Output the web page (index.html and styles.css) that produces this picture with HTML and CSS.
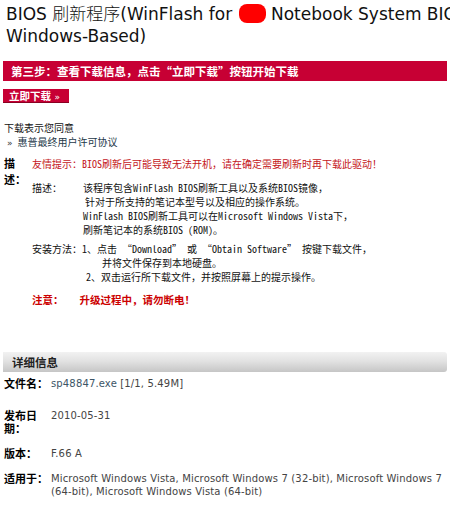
FILE: index.html
```html
<!DOCTYPE html>
<html lang="zh-CN">
<head>
<meta charset="utf-8">
<title>BIOS 刷新程序</title>
<link rel="stylesheet" href="styles.css">
</head>
<body>
<div class="page">
  <h1 class="title">BIOS <span class="title-cjk">刷新程序</span>(WinFlash for <span class="redact"></span> Notebook System BIOS Windows-Based)</h1>

  <div class="step-bar">第三步：查看下载信息，点击“立即下载”按钮开始下载</div>

  <div class="btn-row"><a class="dl-btn">立即下载 <span class="raquo">»</span></a></div>

  <div class="agree">下载表示您同意</div>
  <div class="license"><span class="raquo-dark">»</span> <a class="license-link">惠普最终用户许可协议</a></div>

  <div class="desc">
    <div class="desc-label">描述：</div>
    <div class="desc-body">
      <div class="tip">友情提示：BIOS刷新后可能导致无法开机，请在确定需要刷新时再下载此驱动！</div>
      <div class="para">
        <div class="para-label">描述：</div>
        <div class="para-lines">
          <div>该程序包含WinFlash BIOS刷新工具以及系统BIOS镜像，</div>
          <div class="ind-s">针对于所支持的笔记本型号以及相应的操作系统。</div>
          <div>WinFlash BIOS刷新工具可以在Microsoft Windows Vista下，</div>
          <div>刷新笔记本的系统BIOS (ROM)。</div>
        </div>
      </div>
      <div class="install">
        <div class="install-label">安装方法：</div>
        <div class="para-lines">
          <div>1、点击 “Download” 或 “Obtain Software” 按键下载文件，</div>
          <div class="ind-l">并将文件保存到本地硬盘。</div>
          <div class="ind-m">2、双击运行所下载文件，并按照屏幕上的提示操作。</div>
        </div>
      </div>
      <div class="warn"><span class="warn-label">注意：</span>升级过程中，请勿断电！</div>
    </div>
  </div>

  <div class="section-head">详细信息</div>

  <div class="details">
    <div class="row row-file">
      <div class="dt">文件名：</div>
      <div class="dd"><a class="file-link">sp48847.exe</a> [1/1, 5.49M]</div>
    </div>
    <div class="row">
      <div class="dt">发布日期：</div>
      <div class="dd">2010-05-31</div>
    </div>
    <div class="row">
      <div class="dt">版本：</div>
      <div class="dd">F.66 A</div>
    </div>
    <div class="row">
      <div class="dt">适用于：</div>
      <div class="dd">Microsoft Windows Vista, Microsoft Windows 7 (32-bit), Microsoft Windows 7 (64-bit), Microsoft Windows Vista (64-bit)</div>
    </div>
  </div>
</div>
</body>
</html>
```
FILE: styles.css
```css
html, body {
  margin: 0;
  padding: 0;
  background: #ffffff;
  overflow: hidden;
}

.page {
  width: 444px;
  padding: 0 3px;
  font-family: "Noto Sans Mono CJK SC", "Noto Sans CJK SC", sans-serif;
  font-size: 10px;
  color: #111;
}

.title {
  width: 520px;
  margin: 2px 0 0 3px;
  font-family: "DejaVu Sans", "Noto Sans CJK SC", sans-serif;
  font-weight: normal;
  font-size: 17px;
  line-height: 22px;
  color: #111;
}

.title-cjk {
  font-family: "Noto Sans CJK SC", sans-serif;
  font-size: 17px;
  font-weight: 300;
}

.redact {
  display: inline-block;
  width: 27px;
  height: 19px;
  margin-left: 1px;
  border-radius: 8px;
  background: #ff0000;
  vertical-align: -3px;
}

.step-bar {
  margin-top: 14px;
  height: 20px;
  padding-left: 8px;
  background: #c70034;
  color: #ffffff;
  font-family: "Noto Sans CJK SC", sans-serif;
  font-weight: bold;
  font-size: 11.5px;
  line-height: 20px;
  white-space: nowrap;
}

.btn-row {
  margin-top: 8px;
  height: 14px;
  display: flex;
}

.dl-btn {
  display: block;
  width: 66px;
  height: 14px;
  padding-left: 6px;
  background: #c70034;
  border-bottom: 1px solid #8a0022;
  box-sizing: border-box;
  color: #ffffff;
  font-family: "Noto Sans CJK SC", sans-serif;
  font-weight: bold;
  font-size: 10.5px;
  line-height: 13px;
  white-space: nowrap;
}

.dl-btn .raquo {
  font-family: "DejaVu Sans", sans-serif;
  font-weight: normal;
  font-size: 9px;
  margin-left: 1px;
}

.agree {
  margin-top: 18px;
  padding-left: 1px;
  line-height: 14px;
}

.license {
  padding-left: 4px;
  line-height: 14px;
}

.raquo-dark {
  font-family: "DejaVu Sans", sans-serif;
  font-size: 9px;
  color: #333;
}

.license-link {
  color: #243848;
}

.desc {
  display: flex;
  margin-top: 5px;
}

.desc-label {
  width: 24px;
  padding-left: 1px;
  margin-right: 4px;
  font-family: "Noto Sans CJK SC", sans-serif;
  font-weight: bold;
  font-size: 11px;
  line-height: 16px;
  color: #000;
}

.desc-body {
  flex: 1;
  padding-top: 2px;
  white-space: nowrap;
}

.tip {
  color: #c4161c;
  line-height: 14px;
}

.para {
  display: flex;
  margin-top: 10px;
  line-height: 14px;
}

.para-label {
  width: 51px;
  flex: none;
}

.ind-s {
  padding-left: 2px;
}

.install {
  display: flex;
  margin-top: 5px;
  line-height: 14px;
}

.install-label {
  flex: none;
}

.ind-l {
  padding-left: 20px;
}

.ind-m {
  padding-left: 4px;
}

.warn {
  margin-top: 9px;
  line-height: 14px;
  font-family: "Noto Sans CJK SC", sans-serif;
  font-weight: bold;
  font-size: 10.5px;
  color: #cc0000;
}

.warn-label {
  margin-right: 16px;
}

.section-head {
  margin-top: 45px;
  height: 20px;
  padding-left: 9px;
  border-radius: 0 3px 3px 0;
  background: linear-gradient(#f2f2f2, #e2e2e2 45%, #c6c6c6);
  font-family: "Noto Sans CJK SC", sans-serif;
  font-weight: bold;
  font-size: 11.5px;
  line-height: 20px;
  color: #222;
}

.details {
  margin-top: 5px;
}

.row {
  display: flex;
  padding: 0 0 12px 1px;
}

.row-file {
  padding-bottom: 19px;
}

.dt {
  width: 45px;
  flex: none;
  margin-right: 2px;
  font-family: "Noto Sans CJK SC", sans-serif;
  font-weight: bold;
  font-size: 11px;
  line-height: 13px;
  color: #000;
}

.dd {
  flex: 1;
  font-family: "DejaVu Sans", sans-serif;
  font-size: 10px;
  line-height: 13px;
  letter-spacing: 0.15px;
  color: #444;
}

.file-link {
  color: #3c5566;
}
```
